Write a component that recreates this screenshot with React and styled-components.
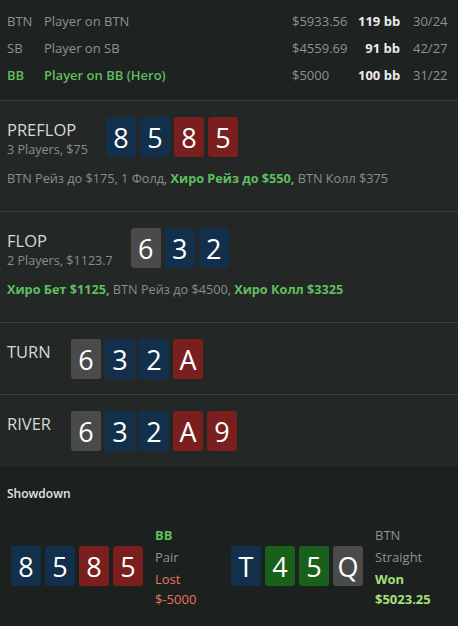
import React from 'react';
import styled, { createGlobalStyle } from 'styled-components';

const Global = createGlobalStyle`
  body {
    margin: 0;
    background: #1c201e;
    font-family: "Open Sans", "Noto Sans", sans-serif;
  }
`;

const Page = styled.div`
  width: 458px;
  background: #1c201e;
`;

const Players = styled.div`
  background: #1e2220;
  padding: 7px 7px 12px;
  border-bottom: 1px solid #3b3f3d;
`;

const PlayerRow = styled.div`
  display: flex;
  align-items: center;
  height: 27px;
  font-size: 13px;
  white-space: nowrap;
  color: ${(p) => (p.hero ? '#5fbf5f' : '#8f9290')};
  font-weight: ${(p) => (p.hero ? 600 : 400)};
`;

const Pos = styled.span`
  width: 37px;
  flex-shrink: 0;
`;

const Name = styled.span`
  flex: 1;
`;

const Stack = styled.span`
  width: 66px;
  flex-shrink: 0;
  color: #8f9290;
  font-weight: 400;
`;

const Bb = styled.span`
  width: 42px;
  flex-shrink: 0;
  text-align: right;
  color: #ececec;
  font-weight: 700;
`;

const Ratio = styled.span`
  width: 38px;
  flex-shrink: 0;
  margin-left: 13px;
  color: #8f9290;
  font-weight: 400;
`;

const Street = styled.div`
  background: #232826;
  padding: 16px 7px ${(p) => (p.action ? '24px' : '15px')};
  border-bottom: 1px solid ${(p) => (p.last ? '#232826' : '#3b3f3d')};
`;

const StreetHead = styled.div`
  display: flex;
  align-items: flex-start;
  gap: 18px;
`;

const Label = styled.div`
  padding-top: 2px;
  min-width: 46px;
`;

const StreetName = styled.div`
  font-size: 16.5px;
  line-height: 22px;
  color: #d6d8d7;
`;

const StreetSub = styled.div`
  font-size: 12.6px;
  line-height: 17px;
  color: #8a8d8b;
`;

const Cards = styled.div`
  display: flex;
  gap: 4px;
  flex-shrink: 0;
`;

const cardColors = {
  b: '#12304b',
  r: '#7a1e1e',
  g: '#4a4a4a',
  e: '#19601a',
};

const Card = styled.div`
  width: 30px;
  height: 40px;
  border-radius: 3px;
  background: ${(p) => cardColors[p.suit]};
  color: #ffffff;
  font-size: 27px;
  display: flex;
  align-items: center;
  justify-content: center;
  line-height: 1;
  padding-top: 1px;
  box-sizing: border-box;
`;

const Action = styled.div`
  margin-top: 12px;
  font-size: 12.7px;
  line-height: 17px;
  color: #8a8d8b;
  white-space: nowrap;
`;

const Hero = styled.span`
  color: #5fbf5f;
  font-weight: 700;
`;

const Showdown = styled.div`
  background: #1c201e;
  padding: 19px 7px 20px;
`;

const ShowTitle = styled.div`
  font-size: 12px;
  line-height: 16px;
  font-weight: 600;
  color: #e2e4e3;
`;

const Hands = styled.div`
  display: flex;
  margin-top: 22px;
  padding-left: 4px;
`;

const Hand = styled.div`
  width: 220px;
  display: flex;
  align-items: flex-start;
  gap: 12px;
`;

const HandCards = styled(Cards)`
  margin-top: 22px;
`;

const Info = styled.div`
  font-size: 13px;
  line-height: 22px;
  color: #8f9290;
`;

const InfoPos = styled.div`
  color: ${(p) => (p.hero ? '#5fbf5f' : '#8f9290')};
  font-weight: ${(p) => (p.hero ? 700 : 400)};
`;

const Result = styled.div`
  color: ${(p) => (p.won ? '#a6e07a' : '#e5765f')};
  font-weight: ${(p) => (p.won ? 700 : 400)};
  line-height: ${(p) => (p.tight ? '19px' : '22px')};
`;

const players = [
  { pos: 'BTN', name: 'Player on BTN', stack: '$5933.56', bb: '119 bb', ratio: '30/24' },
  { pos: 'SB', name: 'Player on SB', stack: '$4559.69', bb: '91 bb', ratio: '42/27' },
  { pos: 'BB', name: 'Player on BB (Hero)', stack: '$5000', bb: '100 bb', ratio: '31/22', hero: true },
];

const renderCards = (cards) =>
  cards.map(([rank, suit], i) => (
    <Card key={i} suit={suit}>{rank}</Card>
  ));

const board = [['6', 'g'], ['3', 'b'], ['2', 'b'], ['A', 'r'], ['9', 'r']];
const heroHand = [['8', 'b'], ['5', 'b'], ['8', 'r'], ['5', 'r']];
const btnHand = [['T', 'b'], ['4', 'e'], ['5', 'e'], ['Q', 'g']];

const App = () => (
  <Page>
    <Global />
    <Players>
      {players.map((p) => (
        <PlayerRow key={p.pos} hero={p.hero}>
          <Pos>{p.pos}</Pos>
          <Name>{p.name}</Name>
          <Stack>{p.stack}</Stack>
          <Bb>{p.bb}</Bb>
          <Ratio>{p.ratio}</Ratio>
        </PlayerRow>
      ))}
    </Players>

    <Street action>
      <StreetHead>
        <Label>
          <StreetName>PREFLOP</StreetName>
          <StreetSub>3 Players, $75</StreetSub>
        </Label>
        <Cards>{renderCards(heroHand)}</Cards>
      </StreetHead>
      <Action>
        BTN Рейз до $175, 1 Фолд, <Hero>Хиро Рейз до $550,</Hero> BTN Колл $375
      </Action>
    </Street>

    <Street action>
      <StreetHead>
        <Label>
          <StreetName>FLOP</StreetName>
          <StreetSub>2 Players, $1123.7</StreetSub>
        </Label>
        <Cards>{renderCards(board.slice(0, 3))}</Cards>
      </StreetHead>
      <Action>
        <Hero>Хиро Бет $1125,</Hero> BTN Рейз до $4500, <Hero>Хиро Колл $3325</Hero>
      </Action>
    </Street>

    <Street>
      <StreetHead>
        <Label>
          <StreetName>TURN</StreetName>
        </Label>
        <Cards>{renderCards(board.slice(0, 4))}</Cards>
      </StreetHead>
    </Street>

    <Street last>
      <StreetHead>
        <Label>
          <StreetName>RIVER</StreetName>
        </Label>
        <Cards>{renderCards(board)}</Cards>
      </StreetHead>
    </Street>

    <Showdown>
      <ShowTitle>Showdown</ShowTitle>
      <Hands>
        <Hand>
          <HandCards>{renderCards(heroHand)}</HandCards>
          <Info>
            <InfoPos hero>BB</InfoPos>
            <div>Pair</div>
            <Result>Lost</Result>
            <Result tight>$-5000</Result>
          </Info>
        </Hand>
        <Hand>
          <HandCards>{renderCards(btnHand)}</HandCards>
          <Info>
            <InfoPos>BTN</InfoPos>
            <div>Straight</div>
            <Result won>Won</Result>
            <Result won tight>$5023.25</Result>
          </Info>
        </Hand>
      </Hands>
    </Showdown>
  </Page>
);

export default App;
